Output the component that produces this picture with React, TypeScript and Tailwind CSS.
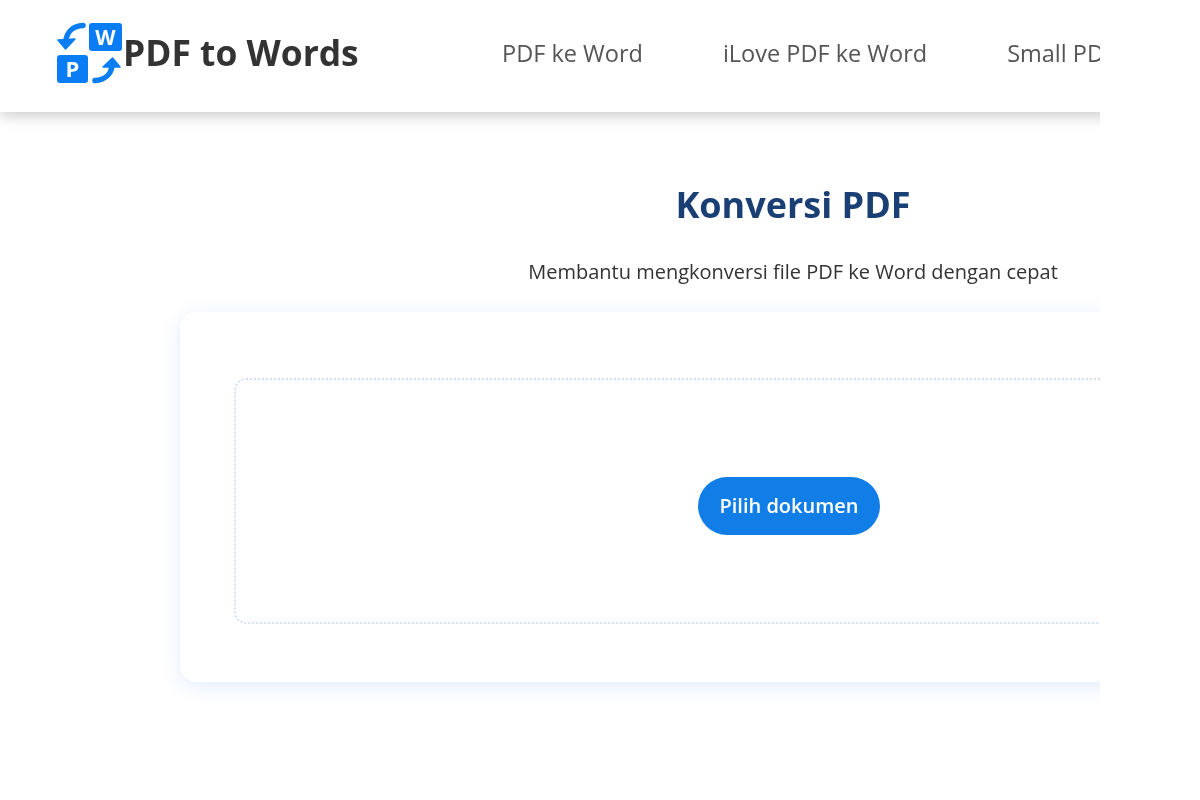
const fontStack = { fontFamily: '"Open Sans", "Noto Sans", sans-serif' };

function Logo() {
  return (
    <svg width="68" height="62" viewBox="0 0 68 62" className="shrink-0">
      <rect x="33" y="1" width="33" height="28" rx="3" fill="#0a7df5" />
      <rect x="1" y="33" width="31" height="28" rx="3" fill="#0a7df5" />
      <text x="49.5" y="22.5" textAnchor="middle" fontSize="21" fontWeight="700" fill="#fff" fontFamily="Open Sans">W</text>
      <text x="16.5" y="55" textAnchor="middle" fontSize="22" fontWeight="700" fill="#fff" fontFamily="Open Sans">P</text>
      {/* top left arrow */}
      <path d="M27 3.5 C17 4 11 10 10 18" fill="none" stroke="#0a7df5" strokeWidth="5.5" strokeLinecap="round" />
      <path d="M2 18 L19 17 L9.5 27 Z" fill="#0a7df5" stroke="#0a7df5" strokeWidth="1.5" strokeLinejoin="round" />
      {/* bottom right arrow */}
      <path d="M39 58.5 C49 58 55 52 56 44" fill="none" stroke="#0a7df5" strokeWidth="5.5" strokeLinecap="round" />
      <path d="M47 45 L64 45 L56.5 36 Z" fill="#0a7df5" stroke="#0a7df5" strokeWidth="1.5" strokeLinejoin="round" />
    </svg>
  );
}

export default function App() {
  return (
    <div className="w-[1100px] h-[800px] overflow-hidden bg-white blur-[0.5px]" style={fontStack}>
      <div className="w-[1586px]">
        <header className="h-[112px] w-full flex items-center pl-[56px] bg-white shadow-[0_4px_14px_rgba(0,0,0,0.2)]">
          <div className="flex items-center w-[446px] -mt-[6px]">
            <Logo />
            <span className="text-[35.4px] font-bold text-[#333] -ml-[1px] whitespace-nowrap">PDF to Words</span>
          </div>
          <nav className="flex gap-[80px] text-[23.5px] text-[#555] -mt-[4px] whitespace-nowrap">
            <span>PDF ke Word</span>
            <span>iLove PDF ke Word</span>
            <span>Small PDF ke Word</span>
          </nav>
        </header>
        <main className="flex flex-col items-center">
          <h1 className="mt-[68px] text-[36px] leading-[50px] font-bold text-[#1a3f75]">Konversi PDF</h1>
          <p className="mt-[28px] text-[20px] leading-[28px] text-[#333]">Membantu mengkonversi file PDF ke Word dengan cepat</p>
          <div className="mt-[26px] w-[1226px] h-[370px] rounded-2xl bg-white pt-[66px] px-[54px] shadow-[0_4px_20px_rgba(10,100,245,0.12)]">
            <div className="h-[246px] rounded-xl border-[2.5px] border-dotted border-[#d3dff7] flex items-center justify-center">
              <button className="mr-2 mt-[9px] w-[182px] h-[58px] rounded-full bg-[#117ee8] text-white text-[20px] font-semibold">Pilih dokumen</button>
            </div>
          </div>
        </main>
      </div>
    </div>
  );
}
